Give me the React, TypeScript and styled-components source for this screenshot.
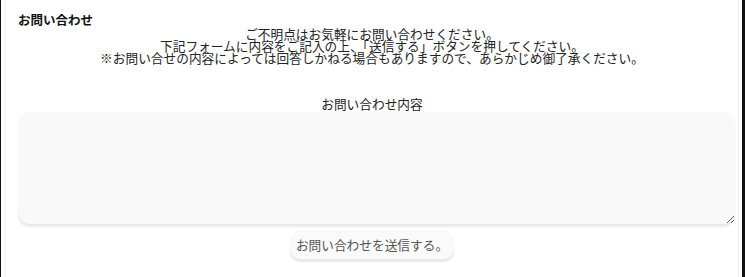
import styled, { createGlobalStyle } from 'styled-components';

const GlobalStyle = createGlobalStyle`
  html, body {
    margin: 0;
    padding: 0;
    background: #ffffff;
  }
  body {
    font-family: "Noto Sans CJK JP", "Noto Sans", sans-serif;
    color: #222;
  }
`;

const Frame = styled.div`
  box-sizing: border-box;
  width: 745px;
  height: 277px;
  border-left: 1px solid #111;
  border-right: 3px solid #111;
  padding-left: 4px;
  padding-right: 3px;
  overflow: hidden;
`;

const Panel = styled.div`
  box-sizing: border-box;
  height: 100%;
  border-left: 1px solid #efefef;
  border-right: 1px solid #efefef;
  display: flex;
  flex-direction: column;
  padding-top: 12px;
`;

const Title = styled.h2`
  margin: 0 0 0 12px;
  font-size: 12.5px;
  font-weight: bold;
  line-height: 16px;
  color: #111;
`;

const Notice = styled.p`
  margin: 0;
  text-align: center;
  font-size: 12.7px;
  line-height: 12px;
  color: #222;
`;

const Label = styled.div`
  margin-top: 33px;
  text-align: center;
  font-size: 12.7px;
  line-height: 14px;
  color: #222;
`;

const Message = styled.textarea`
  box-sizing: border-box;
  display: block;
  margin: 1px 3px 0 12px;
  height: 112px;
  border: none;
  border-radius: 12px;
  background: #f9f9f9;
  box-shadow: 0 3px 2px rgba(0, 0, 0, 0.09);
  resize: vertical;
  outline: none;
  font-family: inherit;
`;

const SubmitRow = styled.div`
  display: flex;
  justify-content: center;
  margin-top: 6px;
`;

const Submit = styled.button`
  box-sizing: border-box;
  height: 29px;
  padding: 0 6px;
  border: none;
  border-radius: 11px;
  background: #fafafa;
  box-shadow: 0 3px 2px rgba(0, 0, 0, 0.09);
  color: #555;
  font-family: inherit;
  font-size: 12.7px;
  white-space: nowrap;
  cursor: pointer;
`;

export default function App() {
  return (
    <>
      <GlobalStyle />
      <Frame>
        <Panel>
          <Title>お問い合わせ</Title>
          <Notice>
            ご不明点はお気軽にお問い合わせください。
            <br />
            下記フォームに内容をご記入の上、「送信する」ボタンを押してください。
            <br />
            ※お問い合せの内容によっては回答しかねる場合もありますので、あらかじめ御了承ください。
          </Notice>
          <Label>お問い合わせ内容</Label>
          <Message />
          <SubmitRow>
            <Submit type="button">お問い合わせを送信する。</Submit>
          </SubmitRow>
        </Panel>
      </Frame>
    </>
  );
}
